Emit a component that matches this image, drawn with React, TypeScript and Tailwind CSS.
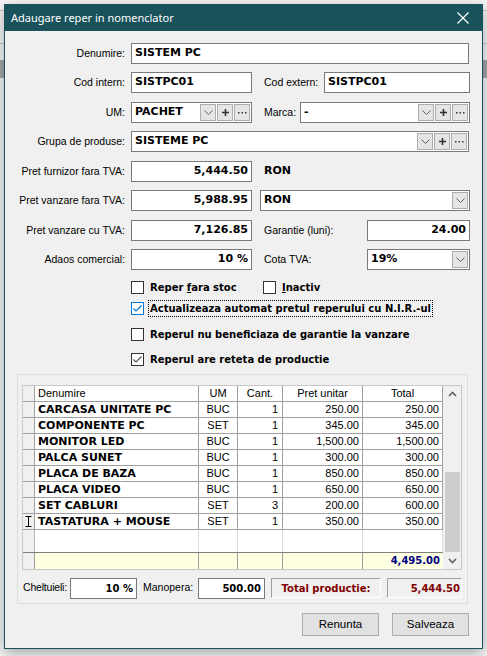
import type { ReactNode } from 'react';

const sans = "font-['Liberation_Sans',Arial,sans-serif]";
const bold = "font-['DejaVu_Sans',Verdana,sans-serif] font-bold";

const rows = [
  { name: 'CARCASA UNITATE PC', um: 'BUC', qty: '1', price: '250.00', total: '250.00' },
  { name: 'COMPONENTE PC', um: 'SET', qty: '1', price: '345.00', total: '345.00' },
  { name: 'MONITOR LED', um: 'BUC', qty: '1', price: '1,500.00', total: '1,500.00' },
  { name: 'PALCA SUNET', um: 'BUC', qty: '1', price: '300.00', total: '300.00' },
  { name: 'PLACA DE BAZA', um: 'BUC', qty: '1', price: '850.00', total: '850.00' },
  { name: 'PLACA VIDEO', um: 'BUC', qty: '1', price: '650.00', total: '650.00' },
  { name: 'SET CABLURI', um: 'SET', qty: '3', price: '200.00', total: '600.00' },
  { name: 'TASTATURA + MOUSE', um: 'SET', qty: '1', price: '350.00', total: '350.00' },
];

const cols = 'grid grid-cols-[12px_164px_39px_45px_80px_80px]';

function Label({ children, className = '' }: { children: ReactNode; className?: string }) {
  return <span className={`${sans} text-[10.5px] text-black whitespace-nowrap ${className}`}>{children}</span>;
}

function Field({ className = '', right, children }: { className?: string; right?: boolean; children?: ReactNode }) {
  return (
    <div
      className={`flex h-[21px] items-center border border-[#7a7a7a] bg-white px-[3px] ${bold} text-[11px] text-black ${
        right ? 'justify-end' : ''
      } ${className}`}
    >
      {children}
    </div>
  );
}

function Chevron() {
  return (
    <svg width="9" height="5" viewBox="0 0 9 5">
      <path d="M0.5 0.5 L4.5 4.5 L8.5 0.5" stroke="#606060" strokeWidth="1" fill="none" />
    </svg>
  );
}

function SmallBtn({ children }: { children: ReactNode }) {
  return (
    <span className="ml-[1px] flex h-[17px] w-[16px] items-center justify-center border border-[#adadad] bg-[#e5e5e5] text-[#333]">
      {children}
    </span>
  );
}

function Combo({ className = '', value, extras }: { className?: string; value: string; extras?: boolean }) {
  return (
    <div className={`flex h-[21px] items-center border border-[#7a7a7a] bg-white pl-[3px] pr-[1px] ${className}`}>
      <span className={`${bold} flex-1 text-[11px] text-black`}>{value}</span>
      <SmallBtn>
        <Chevron />
      </SmallBtn>
      {extras && (
        <>
          <SmallBtn>
            <svg width="7" height="7" viewBox="0 0 7 7">
              <path d="M3.5 0 V7 M0 3.5 H7" stroke="#333" strokeWidth="1.6" />
            </svg>
          </SmallBtn>
          <SmallBtn>
            <svg width="9" height="2" viewBox="0 0 9 2">
              <rect x="0" y="0" width="1.5" height="1.5" fill="#333" />
              <rect x="3.5" y="0" width="1.5" height="1.5" fill="#333" />
              <rect x="7" y="0" width="1.5" height="1.5" fill="#333" />
            </svg>
          </SmallBtn>
        </>
      )}
    </div>
  );
}

function Check({ checked, focus }: { checked?: boolean; focus?: boolean }) {
  const c = focus ? '#0078d7' : '#555555';
  return (
    <span
      className={`flex h-[13px] w-[13px] shrink-0 items-center justify-center border bg-white ${
        focus ? 'border-[#0078d7]' : 'border-[#333333]'
      }`}
    >
      {checked && (
        <svg width="11" height="11" viewBox="0 0 11 11">
          <path d="M1.5 5.5 L4 8 L9.5 2.5" stroke={c} strokeWidth="1.2" fill="none" />
        </svg>
      )}
    </span>
  );
}

function CheckRow({ children, checked, focus, className = '' }: { children: ReactNode; checked?: boolean; focus?: boolean; className?: string }) {
  return (
    <div className={`flex h-[15px] items-center ${className}`}>
      <Check checked={checked} focus={focus} />
      <span
        className={`${bold} ml-[4px] text-[10px] text-black whitespace-nowrap ${
          focus ? 'border border-dotted border-black px-[1px]' : 'px-[2px]'
        }`}
      >
        {children}
      </span>
    </div>
  );
}

function Arrow({ up }: { up?: boolean }) {
  return (
    <svg width="9" height="6" viewBox="0 0 9 6">
      <path d={up ? 'M1 5 L4.5 1.5 L8 5' : 'M1 1 L4.5 4.5 L8 1'} stroke="#606060" strokeWidth="1.6" fill="none" />
    </svg>
  );
}

function Grid() {
  return (
    <div className="flex w-[440px] border border-[#c8c8c8] bg-[#f0f0f0]">
      <div className="w-[420px]">
        {/* header */}
        <div className={`${cols} h-[16px] ${sans} text-[11px] text-black`}>
          <div className="border-r border-b border-[#a0a0a0] bg-[#f0f0f0]" />
          <div className="border-r border-b border-[#a0a0a0] bg-white pl-[3px] leading-[15px]">Denumire</div>
          <div className="border-r border-b border-[#a0a0a0] bg-white text-center leading-[15px]">UM</div>
          <div className="border-r border-b border-[#a0a0a0] bg-white text-center leading-[15px]">Cant.</div>
          <div className="border-r border-b border-[#a0a0a0] bg-white text-center leading-[15px]">Pret unitar</div>
          <div className="border-r border-b border-[#a0a0a0] bg-white text-center leading-[15px]">Total</div>
        </div>
        {rows.map((r, i) => (
          <div key={r.name} className={`${cols} h-[16px] text-[11px] text-black`}>
            <div className="flex items-center justify-center border-r border-b border-[#a0a0a0] bg-[#f0f0f0]">
              {i === rows.length - 1 && (
                <svg width="7" height="11" viewBox="0 0 7 11">
                  <path d="M0.5 0.5 H6.5 M3.5 0.5 V10.5 M0.5 10.5 H6.5" stroke="#000" strokeWidth="1" fill="none" />
                </svg>
              )}
            </div>
            <div className={`border-r border-b border-[#a0a0a0] bg-white pl-[3px] leading-[15px] ${bold} text-[11px]`}>{r.name}</div>
            <div className={`border-r border-b border-[#a0a0a0] bg-white text-center leading-[15px] ${sans}`}>{r.um}</div>
            <div className={`border-r border-b border-[#a0a0a0] bg-white pr-[4px] text-right leading-[15px] ${sans}`}>{r.qty}</div>
            <div className={`border-r border-b border-[#a0a0a0] bg-white pr-[3px] text-right leading-[15px] ${sans}`}>{r.price}</div>
            <div className={`border-r border-b border-[#a0a0a0] bg-white pr-[3px] text-right leading-[15px] ${sans}`}>{r.total}</div>
          </div>
        ))}
        {/* empty space */}
        <div className={`${cols} h-[22px]`}>
          <div className="border-r border-[#b4b4b4] bg-[#f0f0f0]" />
          <div className="border-r border-[#dcdcdc] bg-white" />
          <div className="border-r border-[#dcdcdc] bg-white" />
          <div className="border-r border-[#dcdcdc] bg-white" />
          <div className="border-r border-[#dcdcdc] bg-white" />
          <div className="border-r border-[#dcdcdc] bg-white" />
        </div>
        {/* footer */}
        <div className={`${cols} h-[17px] border-t border-[#808080]`}>
          <div className="border-r border-[#a0a0a0] bg-[#f0f0f0]" />
          <div className="border-r border-[#a0a0a0] bg-[#ffffe1]" />
          <div className="border-r border-[#a0a0a0] bg-[#ffffe1]" />
          <div className="border-r border-[#a0a0a0] bg-[#ffffe1]" />
          <div className="border-r border-[#a0a0a0] bg-[#ffffe1]" />
          <div className={`bg-[#ffffe1] pr-[3px] text-right leading-[16px] ${bold} text-[10px] text-[#000080]`}>4,495.00</div>
        </div>
      </div>
      {/* scrollbar */}
      <div className="flex w-[18px] flex-col items-center">
        <div className="flex h-[16px] items-center justify-center">
          <Arrow up />
        </div>
        <div className="flex-1 w-full pt-[70px]">
          <div className="mx-auto h-[80px] w-[15px] bg-[#cdcdcd]" />
        </div>
        <div className="flex h-[17px] items-center justify-center">
          <Arrow />
        </div>
      </div>
    </div>
  );
}

export default function App() {
  return (
    <div className="relative h-[656px] w-[487px] overflow-hidden bg-[#f7f7f7]">
      {/* app behind the dialog */}
      <div className="h-[10px]" />
      <div className="h-[33px] border-t border-[#c8c8c8]" />
      <div className="h-[17px] border-t border-[#c8c8c8]" />
      <div className="h-[18px] bg-[#a8a8a8]" />

      {/* dialog */}
      <div className="absolute left-[4px] top-[4px] flex h-[645px] w-[479px] flex-col border border-[#1a525b] bg-[#f0f0f0] shadow-[0_4px_14px_rgba(0,0,0,0.35)]">
        {/* title bar */}
        <div className="flex h-[26px] shrink-0 items-center justify-between bg-[#1a525b] pl-[6px] pr-[13px]">
          <span className="font-['Noto_Sans',sans-serif] text-[11px] text-white">Adaugare reper in nomenclator</span>
          <svg width="12" height="12" viewBox="0 0 12 12">
            <path d="M0.5 0.5 L11.5 11.5 M11.5 0.5 L0.5 11.5" stroke="#fff" strokeWidth="1.2" />
          </svg>
        </div>

        <div className="flex flex-col">
          {/* Denumire */}
          <div className="mt-[12px] flex items-center">
            <Label className="w-[120px] text-right">Denumire:</Label>
            <Field className="ml-[6px] w-[338px]">SISTEM PC</Field>
          </div>
          {/* Cod intern / extern */}
          <div className="mt-[8px] flex items-center">
            <Label className="w-[120px] text-right">Cod intern:</Label>
            <Field className="ml-[6px] w-[121px]">SISTPC01</Field>
            <Label className="ml-[12px] w-[60px]">Cod extern:</Label>
            <Field className="w-[146px]">SISTPC01</Field>
          </div>
          {/* UM / Marca */}
          <div className="mt-[9px] flex items-center">
            <Label className="w-[120px] text-right">UM:</Label>
            <Combo className="ml-[6px] w-[121px]" value="PACHET" extras />
            <Label className="ml-[12px] w-[36px]">Marca:</Label>
            <Combo className="w-[170px]" value="-" extras />
          </div>
          {/* Grupa */}
          <div className="mt-[8px] flex items-center">
            <Label className="w-[120px] text-right">Grupa de produse:</Label>
            <Combo className="ml-[6px] w-[338px]" value="SISTEME PC" extras />
          </div>
          {/* Pret furnizor */}
          <div className="mt-[9px] flex items-center">
            <Label className="w-[120px] text-right">Pret furnizor fara TVA:</Label>
            <Field className="ml-[6px] w-[121px]" right>5,444.50</Field>
            <span className={`${bold} ml-[12px] text-[11px] text-black`}>RON</span>
          </div>
          {/* Pret vanzare fara */}
          <div className="mt-[8px] flex items-center">
            <Label className="w-[120px] text-right">Pret vanzare fara TVA:</Label>
            <Field className="ml-[6px] w-[121px]" right>5,988.95</Field>
            <Combo className="ml-[8px] w-[210px]" value="RON" />
          </div>
          {/* Pret vanzare cu */}
          <div className="mt-[9px] flex items-center">
            <Label className="w-[120px] text-right">Pret vanzare cu TVA:</Label>
            <Field className="ml-[6px] w-[121px]" right>7,126.85</Field>
            <Label className="ml-[12px] w-[103px]">Garantie (luni):</Label>
            <Field className="w-[103px]" right>24.00</Field>
          </div>
          {/* Adaos */}
          <div className="mt-[8px] flex items-center">
            <Label className="w-[120px] text-right">Adaos comercial:</Label>
            <Field className="ml-[6px] w-[121px]" right>10 %</Field>
            <Label className="ml-[12px] w-[103px]">Cota TVA:</Label>
            <Combo className="w-[103px]" value="19%" />
          </div>

          {/* checkboxes */}
          <div className="ml-[126px] mt-[10px] flex">
            <CheckRow className="w-[132px]">
              Reper <span className="underline">f</span>ara stoc
            </CheckRow>
            <CheckRow>
              <span className="underline">I</span>nactiv
            </CheckRow>
          </div>
          <CheckRow className="ml-[126px] mt-[6px]" checked focus>
            Actualizeaza automat pretul reperului cu N.I.R.-ul
          </CheckRow>
          <CheckRow className="ml-[126px] mt-[11px]">Reperul nu beneficiaza de garantie la vanzare</CheckRow>
          <CheckRow className="ml-[126px] mt-[10px]" checked>
            Reperul are reteta de productie
          </CheckRow>

          {/* recipe panel */}
          <div className="ml-[12px] mt-[7px] w-[451px] border border-[#dcdcdc] pb-[5px] pl-[4px] pt-[10px]">
            <Grid />
            <div className="mt-[8px] flex h-[20px] items-center">
              <Label className="ml-[1px] w-[47px] tracking-[-0.2px]">Cheltuieli:</Label>
              <Field className="h-[20px] w-[67px]" right>
                <span className="text-[10px]">10 %</span>
              </Field>
              <Label className="ml-[6px] w-[55px]">Manopera:</Label>
              <Field className="h-[20px] w-[67px]" right>
                <span className="text-[10px]">500.00</span>
              </Field>
              <div
                className={`ml-[6px] flex h-[20px] w-[110px] items-center justify-center border border-[#a0a0a0] border-b-white border-r-white ${bold} text-[10px] text-[#800000]`}
              >
                Total productie:
              </div>
              <div
                className={`ml-[6px] flex h-[20px] w-[75px] items-center justify-end border border-[#a0a0a0] border-b-white border-r-white pr-[1px] ${bold} text-[10px] text-[#800000]`}
              >
                5,444.50
              </div>
            </div>
          </div>

          {/* buttons */}
          <div className="mt-[9px] flex justify-end pr-[13px]">
            <button className={`h-[23px] w-[77px] border border-[#adadad] bg-[#e1e1e1] ${sans} text-[11.5px] text-black`}>
              Renunta
            </button>
            <button className={`ml-[13px] h-[23px] w-[77px] border border-[#adadad] bg-[#e1e1e1] ${sans} text-[11.5px] text-black`}>
              Salveaza
            </button>
          </div>
        </div>
      </div>
    </div>
  );
}
